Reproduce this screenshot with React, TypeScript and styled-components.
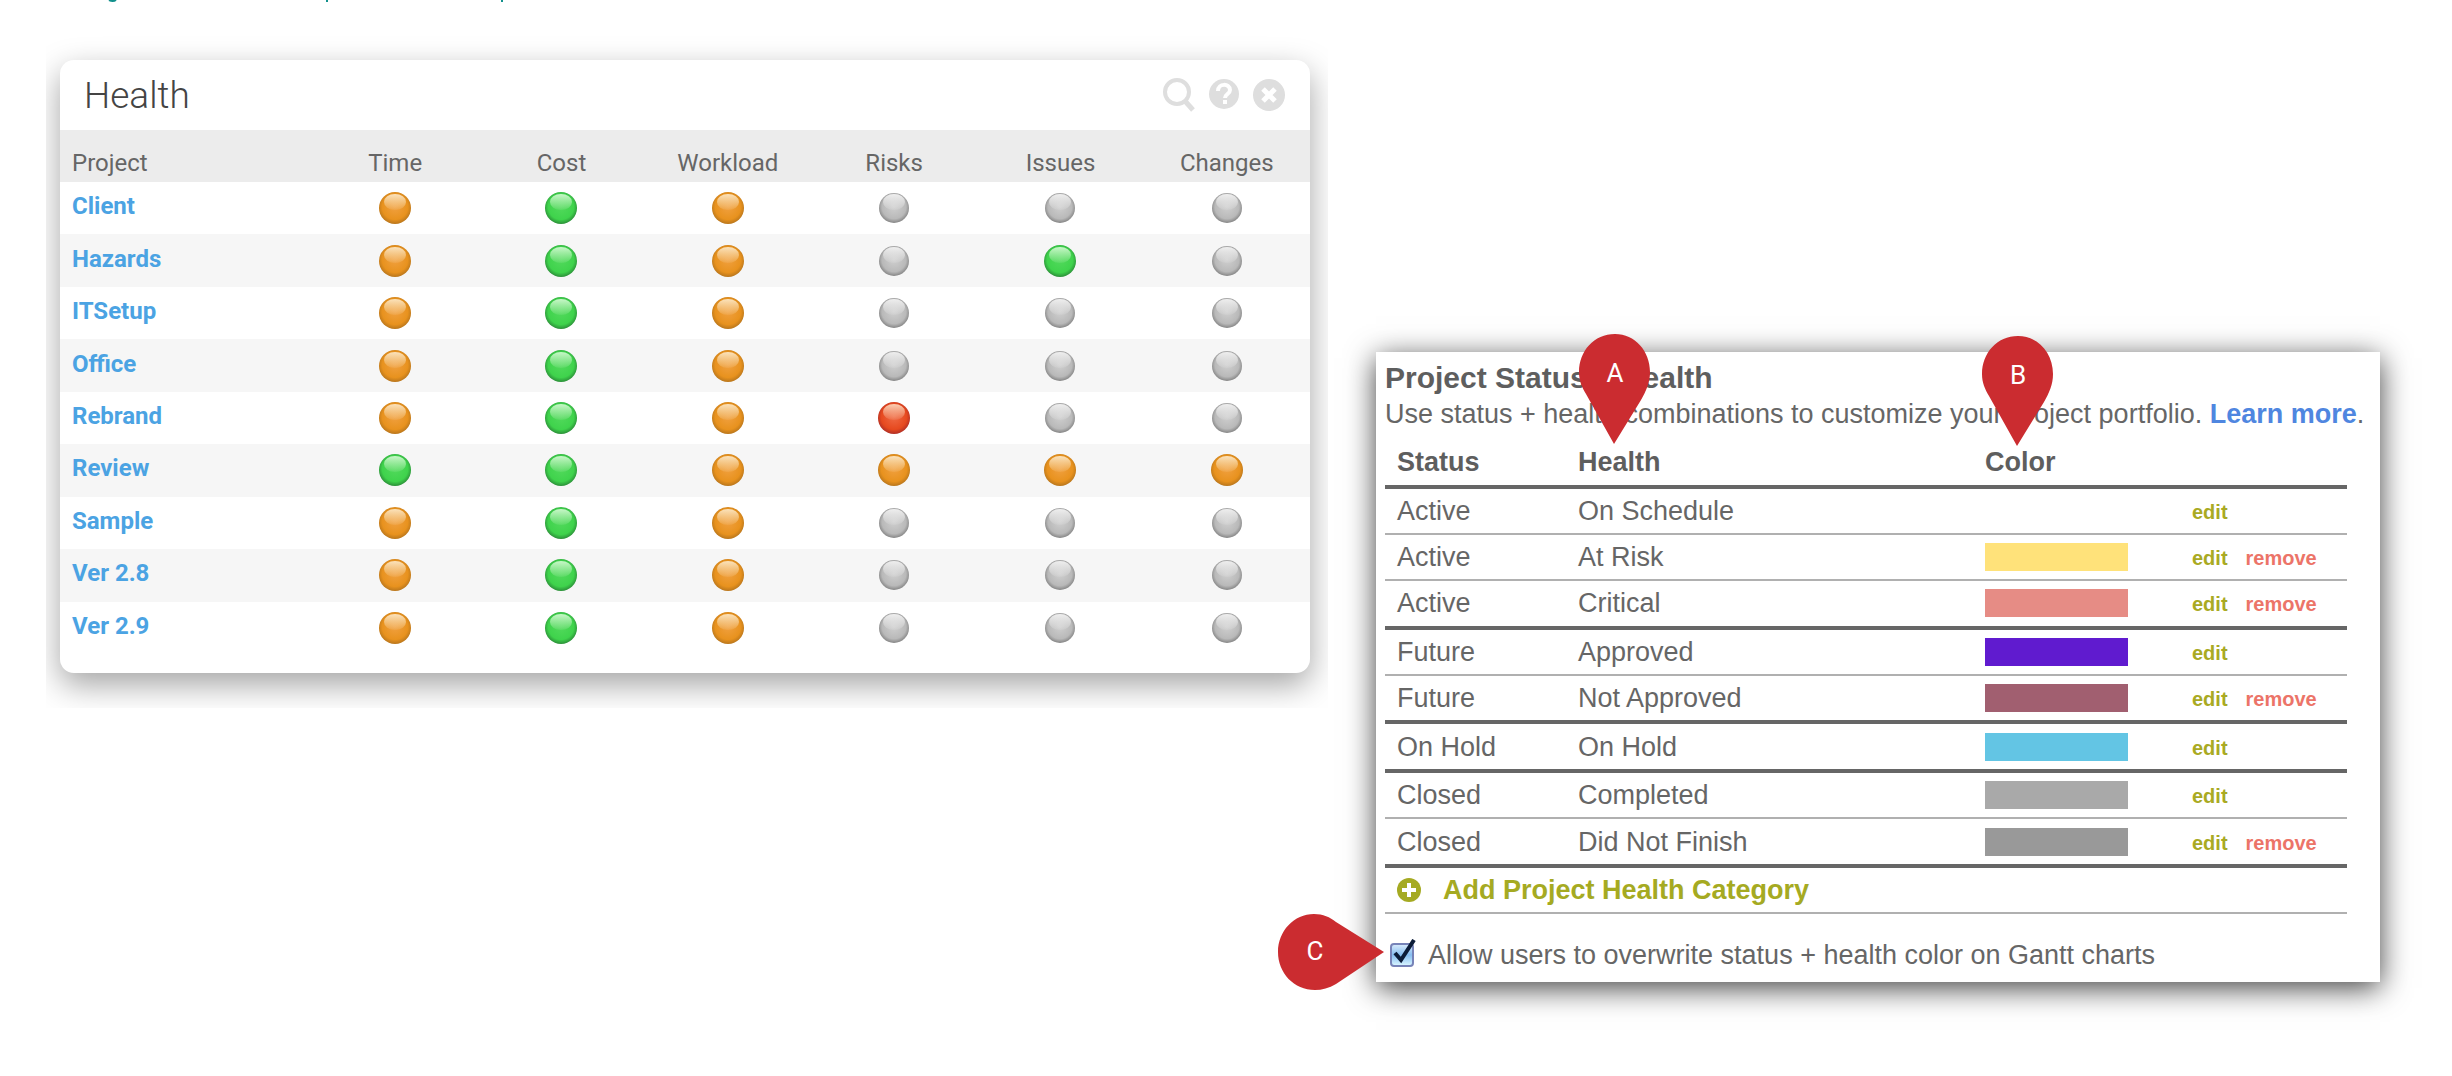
import React from "react";
import styled, { createGlobalStyle } from "styled-components";

type Tone = "orange" | "green" | "gray" | "red";

const GlobalStyle = createGlobalStyle`
  * { box-sizing: border-box; }
  body { margin: 0; background: #fff; }
`;

const Page = styled.main`
  display: flex;
  flex-direction: column;
  min-height: 100vh;
`;

const CutLine = styled.div`
  height: 30px;
  padding-left: 107px;
`;

const CutStrokes = styled.svg`
  display: block;
`;

const Columns = styled.div`
  display: grid;
  grid-template-columns: minmax(0, 1282fr) minmax(0, 1004fr);
  align-items: start;
  column-gap: 48px;
  padding: 0 72px 60px 46px;
`;

const Frame = styled.div`
  overflow: hidden;
  padding: 30px 18px 35px 14px;
`;

const Card = styled.section`
  background: #fff;
  border-radius: 14px;
  overflow: hidden;
  padding-bottom: 19px;
  box-shadow: 0 12px 32px rgba(0, 0, 0, 0.36);
  font-family: Roboto, sans-serif;
`;

const CardHeader = styled.header`
  display: flex;
  align-items: center;
  justify-content: space-between;
  height: 70px;
  padding: 0 24px;
`;

const CardTitle = styled.h2`
  margin: 0;
  font-size: 37px;
  font-weight: 300;
  color: #444;
`;

const Tools = styled.div`
  display: flex;
  align-items: center;
  gap: 12px;
`;

const Tool = styled.button`
  display: flex;
  padding: 0;
  border: 0;
  background: none;
  color: #dedede;
`;

const HealthTable = styled.table`
  width: 100%;
  height: 524px;
  table-layout: fixed;
  border-collapse: collapse;
  th, td { height: 52px; padding: 0; text-align: center; }
  th { padding-top: 14px; }
  th:first-child { width: 252px; }
  th:first-child, td:first-child { text-align: left; padding-left: 12px; }
  thead tr { background: #ececec; }
  tbody tr:nth-child(even) { background: #f6f6f6; }
`;

const HeadCell = styled.th`
  font-size: 24px;
  line-height: 28px;
  font-weight: 400;
  color: #666;
`;

const ProjectLink = styled.a`
  display: block;
  padding-bottom: 4px;
  font-size: 24px;
  line-height: 28px;
  font-weight: 700;
  color: #4ba3e3;
  text-decoration: none;
`;

const Light = styled.svg`
  display: block;
  margin: 0 auto;
`;

const Panel = styled.section`
  position: relative;
  margin-top: 322px;
  padding: 8px 9px 11px;
  background: #fff;
  box-shadow: 0 6px 28px rgba(0, 0, 0, 0.75);
  font-family: "Liberation Sans", Arial, sans-serif;
  font-size: 27px;
  line-height: 32px;
  color: #666;
`;

const PanelTitle = styled.h2`
  margin: 0;
  font-size: 30px;
  line-height: 36px;
  color: #5e5e5e;
`;

const Intro = styled.p`
  margin: 0;
  line-height: 36px;
  white-space: nowrap;
`;

const LearnLink = styled.a`
  color: #4f86e0;
  font-weight: 700;
  text-decoration: none;
`;

const StatusTable = styled.table`
  width: calc(100% - 24px);
  height: 475px;
  margin-top: 7px;
  table-layout: fixed;
  border-collapse: separate;
  border-spacing: 0;
`;

const StatusHead = styled.th<{ $width?: number }>`
  width: ${(p) => (p.$width ? `${p.$width}px` : "auto")};
  height: 50px;
  padding: 0 0 0 12px;
  text-align: left;
  color: #5e5e5e;
  border-bottom: 4px solid #666;
`;

const StatusCell = styled.td<{ $heavy?: boolean }>`
  padding: 0 0 0 12px;
  border-bottom: ${(p) => (p.$heavy ? "4px solid #666" : "2px solid #b0b0b0")};
`;

const Swatch = styled.div<{ $color: string }>`
  width: 143px;
  height: 28px;
  background: ${(p) => p.$color};
`;

const Actions = styled.div`
  display: flex;
  gap: 18px;
  padding-top: 2px;
`;

const Action = styled.button<{ $danger?: boolean }>`
  padding: 0;
  border: 0;
  background: none;
  font: 700 20px/28px "Liberation Sans", Arial, sans-serif;
  color: ${(p) => (p.$danger ? "#ec7468" : "#a9aa23")};
`;

const AddButton = styled.button`
  display: flex;
  align-items: center;
  gap: 22px;
  padding: 0;
  border: 0;
  background: none;
  font: 700 27px/32px "Liberation Sans", Arial, sans-serif;
  color: #a5aa22;
`;

const AllowRow = styled.label`
  display: flex;
  align-items: center;
  gap: 14px;
  margin-top: 25px;
  padding-left: 5px;
`;

const CheckWrap = styled.span`
  position: relative;
  display: flex;
  width: 24px;
  height: 24px;
`;

const CheckBox = styled.input`
  appearance: none;
  width: 24px;
  height: 24px;
  margin: 0;
  border: 2px solid #7783b8;
  border-radius: 4px;
  background: linear-gradient(#d3e8fb, #86bdf0 50%, #d5f3ff);
`;

const Tick = styled.svg`
  position: absolute;
  left: 0;
  bottom: 0;
  pointer-events: none;
  display: none;
  input:checked + & { display: block; }
`;

const Marker = styled.svg<{ $x: number; $y: number }>`
  position: absolute;
  left: ${(p) => p.$x}px;
  top: ${(p) => p.$y}px;
  font: 26px Roboto, sans-serif;
`;

const tones: Record<Tone, [string, string, string, string]> = {
  orange: ["#fbe3bd", "#f0a040", "#e8921e", "#b9761c"],
  green: ["#c9f7c9", "#52d95c", "#3fd34c", "#2b8f38"],
  gray: ["#efefef", "#cfcfcf", "#b9b9b9", "#858585"],
  red: ["#fbd0b4", "#ef6a45", "#e6491f", "#b02f26"],
};

const Defs = styled.svg`
  display: block;
`;

function ToneDefs() {
  return (
    <Defs width="0" height="0" aria-hidden="true">
      <defs>
        {(Object.keys(tones) as Tone[]).map((t) => (
          <React.Fragment key={t}>
            <radialGradient id={`body-${t}`} cx="50%" cy="46%" r="54%">
              <stop offset="0" stopColor={tones[t][1]} />
              <stop offset="0.74" stopColor={tones[t][2]} />
              <stop offset="1" stopColor={tones[t][3]} />
            </radialGradient>
            <linearGradient id={`shine-${t}`} x1="0" y1="0" x2="0" y2="1">
              <stop offset="0" stopColor={tones[t][0]} />
              <stop offset="1" stopColor={tones[t][0]} stopOpacity="0.1" />
            </linearGradient>
          </React.Fragment>
        ))}
      </defs>
    </Defs>
  );
}

function StatusLight({ tone }: { tone: Tone }) {
  const r = tone === "gray" ? 15 : 16;
  return (
    <Light width="34" height="34" viewBox="0 0 34 34" role="img" aria-label={tone}>
      <circle cx="17" cy="17" r={r} fill={`url(#body-${tone})`} />
      <ellipse cx="17" cy="11" rx="11" ry="8" fill={`url(#shine-${tone})`} />
    </Light>
  );
}

const o: Tone = "orange";
const g: Tone = "green";
const n: Tone = "gray";

const projects: [string, Tone[]][] = [
  ["Client", [o, g, o, n, n, n]],
  ["Hazards", [o, g, o, n, g, n]],
  ["ITSetup", [o, g, o, n, n, n]],
  ["Office", [o, g, o, n, n, n]],
  ["Rebrand", [o, g, o, "red", n, n]],
  ["Review", [g, g, o, o, o, o]],
  ["Sample", [o, g, o, n, n, n]],
  ["Ver 2.8", [o, g, o, n, n, n]],
  ["Ver 2.9", [o, g, o, n, n, n]],
];

interface StatusRow {
  status: string;
  health: string;
  color?: string;
  removable?: boolean;
  heavy?: boolean;
}

const statuses: StatusRow[] = [
  { status: "Active", health: "On Schedule" },
  { status: "Active", health: "At Risk", color: "#ffe27a", removable: true },
  { status: "Active", health: "Critical", color: "#e68c85", removable: true, heavy: true },
  { status: "Future", health: "Approved", color: "#601bcf" },
  { status: "Future", health: "Not Approved", color: "#a15f70", removable: true, heavy: true },
  { status: "On Hold", health: "On Hold", color: "#63c5e4", heavy: true },
  { status: "Closed", health: "Completed", color: "#a9a9a9" },
  { status: "Closed", health: "Did Not Finish", color: "#999999", removable: true, heavy: true },
];

function DropMarker({ letter, x, y }: { letter: string; x: number; y: number }) {
  return (
    <Marker $x={x} $y={y} width="72" height="110" viewBox="0 0 72 110">
      <path d="M36 0C56 0 71 17 71 38C71 49 67 57 62 66L35 110L7 60C3 53 0 47 0 38C0 17 15 0 36 0Z" fill="#cb2c30" />
      <text x="36" y="48" textAnchor="middle" fill="#fff">{letter}</text>
    </Marker>
  );
}

function SideMarker({ letter, x, y }: { letter: string; x: number; y: number }) {
  return (
    <Marker $x={x} $y={y} width="106" height="76" viewBox="0 0 106 76">
      <path d="M106 38L58 70C51 74 44 76 37 76C16 76 0 59 0 38C0 17 16 0 36 0C45 0 52 3 58 8Z" fill="#cb2c30" />
      <text x="37" y="46" textAnchor="middle" fill="#fff">{letter}</text>
    </Marker>
  );
}

export default function App() {
  return (
    <Page>
      <GlobalStyle />
      <ToneDefs />
      <CutLine>
        <CutStrokes width="400" height="3" viewBox="0 0 400 3" fill="none" stroke="#12908c" strokeWidth="2" aria-hidden="true">
          <path d="M2 0Q6 2 9 0M220 0V2M395 0V2" />
        </CutStrokes>
      </CutLine>
      <Columns>
        <Frame>
          <Card>
            <CardHeader>
              <CardTitle>Health</CardTitle>
              <Tools>
                <Tool type="button" aria-label="Search">
                  <svg width="34" height="34" viewBox="0 0 34 34" fill="none" stroke="currentColor">
                    <circle cx="15" cy="14" r="12" strokeWidth="4" />
                    <path d="M23 23L31 32" strokeWidth="5" />
                  </svg>
                </Tool>
                <Tool type="button" aria-label="Help">
                  <svg width="32" height="34" viewBox="0 0 32 34">
                    <circle cx="16" cy="16" r="15" fill="currentColor" />
                    <path d="M10 13C10 5 22 5 22 12C22 16 17 16 17 20M17 22V26" fill="none" stroke="#fff" strokeWidth="4" />
                  </svg>
                </Tool>
                <Tool type="button" aria-label="Close">
                  <svg width="34" height="34" viewBox="0 0 34 34">
                    <circle cx="17" cy="17" r="16" fill="currentColor" />
                    <path d="M11 11L23 23M23 11L11 23" stroke="#fff" strokeWidth="5" />
                  </svg>
                </Tool>
              </Tools>
            </CardHeader>
            <HealthTable>
              <thead>
                <tr>
                  {["Project", "Time", "Cost", "Workload", "Risks", "Issues", "Changes"].map((h) => (
                    <HeadCell key={h} scope="col">{h}</HeadCell>
                  ))}
                </tr>
              </thead>
              <tbody>
                {projects.map(([name, lights]) => (
                  <tr key={name}>
                    <td><ProjectLink href="#">{name}</ProjectLink></td>
                    {lights.map((tone, i) => (
                      <td key={i}><StatusLight tone={tone} /></td>
                    ))}
                  </tr>
                ))}
              </tbody>
            </HealthTable>
          </Card>
        </Frame>
        <Panel>
          <PanelTitle>Project Status + Health</PanelTitle>
          <Intro>
            Use status + health combinations to customize your project portfolio.{" "}
            <LearnLink href="#">Learn more</LearnLink>.
          </Intro>
          <StatusTable>
            <thead>
              <tr>
                <StatusHead scope="col" $width={181}>Status</StatusHead>
                <StatusHead scope="col">Health</StatusHead>
                <StatusHead scope="col" $width={207}>Color</StatusHead>
                <StatusHead aria-label="Actions" $width={167} />
              </tr>
            </thead>
            <tbody>
              {statuses.map((s) => (
                <tr key={s.status + s.health}>
                  <StatusCell $heavy={s.heavy}>{s.status}</StatusCell>
                  <StatusCell $heavy={s.heavy}>{s.health}</StatusCell>
                  <StatusCell $heavy={s.heavy}>{s.color && <Swatch $color={s.color} />}</StatusCell>
                  <StatusCell $heavy={s.heavy}>
                    <Actions>
                      <Action type="button">edit</Action>
                      {s.removable && <Action type="button" $danger>remove</Action>}
                    </Actions>
                  </StatusCell>
                </tr>
              ))}
              <tr>
                <StatusCell colSpan={4}>
                  <AddButton type="button">
                    <svg width="24" height="24" viewBox="0 0 24 24">
                      <circle cx="12" cy="12" r="12" fill="currentColor" />
                      <path d="M12 5V19M5 12H19" stroke="#fff" strokeWidth="4" />
                    </svg>
                    Add Project Health Category
                  </AddButton>
                </StatusCell>
              </tr>
            </tbody>
          </StatusTable>
          <AllowRow htmlFor="allow-overwrite">
            <CheckWrap>
              <CheckBox id="allow-overwrite" type="checkbox" defaultChecked />
              <Tick width="26" height="28" viewBox="0 0 26 28" fill="none" stroke="#0c1c38" strokeWidth="4">
                <path d="M5 14L11 21L24 1" />
              </Tick>
            </CheckWrap>
            Allow users to overwrite status + health color on Gantt charts
          </AllowRow>
          <DropMarker letter="A" x={203} y={-18} />
          <DropMarker letter="B" x={606} y={-16} />
          <SideMarker letter="C" x={-98} y={562} />
        </Panel>
      </Columns>
    </Page>
  );
}
